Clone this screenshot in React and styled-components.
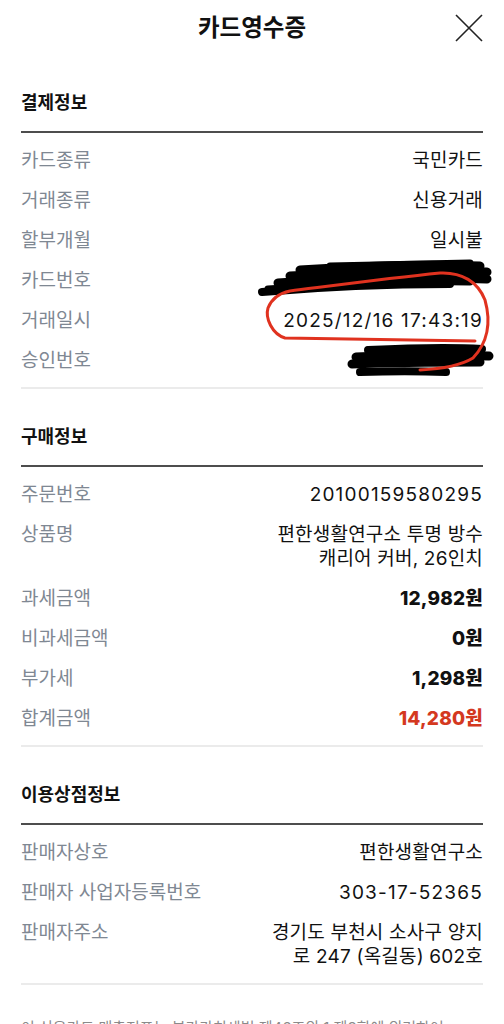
import React from 'react';
import styled, { createGlobalStyle } from 'styled-components';

const GlobalStyle = createGlobalStyle`
  html, body { margin: 0; padding: 0; background: #fff; }
  body {
    font-family: Inter, "Noto Sans CJK KR", sans-serif;
    -webkit-font-smoothing: antialiased;
    color: #111;
  }
  * { box-sizing: border-box; }
`;

const Page = styled.div`
  position: relative;
  width: 504px;
  height: 1024px;
  overflow: hidden;
  background: #fff;
`;

const Header = styled.header`
  height: 55px;
  display: grid;
  grid-template-columns: 1fr auto 1fr;
  align-items: center;
  padding: 0 21px;
`;

const Title = styled.h1`
  grid-column: 2;
  margin: 0;
  font-size: 23.5px;
  line-height: 28px;
  font-weight: 700;
  color: #111;
`;

const CloseButton = styled.button`
  grid-column: 3;
  justify-self: end;
  width: 30px;
  height: 30px;
  margin-right: -1px;
  padding: 0;
  border: 0;
  background: none;
  display: flex;
  align-items: center;
  justify-content: center;
`;

const Section = styled.section`
  padding: 0 21px;
`;

const SectionTitle = styled.h2`
  margin: 36px 0 0;
  font-size: 18px;
  line-height: 24px;
  font-weight: 700;
  color: #111;
`;

const Rule = styled.div`
  height: 2px;
  background: ${(p) => (p.$strong ? '#4d4d4d' : '#ebebeb')};
  margin-top: ${(p) => (p.$strong ? '16px' : '0')};
`;

const List = styled.dl`
  margin: 0;
  padding: 16px 0 14px;
  display: flex;
  flex-direction: column;
  gap: 16px;
`;

const Row = styled.div`
  display: flex;
  justify-content: space-between;
  align-items: flex-start;
  gap: 16px;
  min-height: 24px;
`;

const Label = styled.dt`
  flex-shrink: 0;
  font-size: 19px;
  line-height: 24px;
  color: #7f8893;
  font-weight: 400;
`;

const Value = styled.dd`
  margin: 0;
  max-width: 222px;
  text-align: right;
  font-size: 19px;
  line-height: 24px;
  letter-spacing: ${(p) => (p.$numeric ? '1.2px' : '0.2px')};
  font-weight: ${(p) => (p.$amount ? 800 : 400)};
  color: ${(p) => (p.$total ? '#d4391f' : '#111')};
`;

const Note = styled.p`
  margin: 32px 0 0;
  padding: 0 21px;
  font-size: 15px;
  line-height: 22px;
  color: #8a8a8a;
  white-space: nowrap;
`;

const Annotation = styled.svg`
  position: absolute;
  left: 0;
  top: 0;
  pointer-events: none;
`;

const payment = [
  ['카드종류', '국민카드'],
  ['거래종류', '신용거래'],
  ['할부개월', '일시불'],
  ['카드번호', ''],
  ['거래일시', '2025/12/16 17:43:19', 'number'],
  ['승인번호', ''],
];

const purchase = [
  ['주문번호', '20100159580295', 'number'],
  ['상품명', '편한생활연구소 투명 방수 캐리어 커버, 26인치'],
  ['과세금액', '12,982원', 'amount'],
  ['비과세금액', '0원', 'amount'],
  ['부가세', '1,298원', 'amount'],
  ['합계금액', '14,280원', 'total'],
];

const store = [
  ['판매자상호', '편한생활연구소'],
  ['판매자 사업자등록번호', '303-17-52365', 'number'],
  ['판매자주소', '경기도 부천시 소사구 양지로 247 (옥길동) 602호'],
];

function InfoSection({ title, rows }) {
  return (
    <Section>
      <SectionTitle>{title}</SectionTitle>
      <Rule $strong />
      <List>
        {rows.map(([label, value, kind]) => (
          <Row key={label}>
            <Label>{label}</Label>
            <Value
              $numeric={kind === 'number'}
              $amount={kind === 'amount' || kind === 'total'}
              $total={kind === 'total'}
            >
              {value}
            </Value>
          </Row>
        ))}
      </List>
      <Rule />
    </Section>
  );
}

function Marks() {
  return (
    <Annotation width="504" height="1024" viewBox="0 0 504 1024">
      <g fill="none" stroke="#000" strokeLinecap="round" strokeLinejoin="round">
        <path strokeWidth="9" d="M300 270 C 360 266, 420 264, 480 266" />
        <path strokeWidth="9" d="M290 276 C 360 272, 430 270, 487 272" />
        <path strokeWidth="9" d="M278 283 C 340 278, 420 276, 487 279" />
        <path strokeWidth="8" d="M262 292 C 320 287, 380 284, 450 284" />
        <path strokeWidth="7" d="M268 289 L 330 285 M 330 266 L 470 263 M 290 280 L 470 282" />
        <path strokeWidth="8" d="M368 350 C 410 348, 450 347, 482 349" />
        <path strokeWidth="9" d="M356 357 C 400 355, 450 355, 489 356" />
        <path strokeWidth="9" d="M352 364 C 400 362, 440 362, 480 362" />
        <path strokeWidth="8" d="M360 372 C 390 371, 420 371, 446 372" />
      </g>
      <path
        fill="none"
        stroke="#e0321f"
        strokeWidth="3"
        strokeLinecap="round"
        d="M475 341 C 420 340, 340 339, 285 338 C 272 334, 265 318, 268 308 C 272 298, 280 293, 290 291 C 330 286, 390 278, 440 273 C 462 272, 478 282, 485 300 C 490 318, 490 340, 473 358 C 460 366, 440 369, 420 370"
      />
    </Annotation>
  );
}

export default function App() {
  return (
    <Page>
      <GlobalStyle />
      <Header>
        <Title>카드영수증</Title>
        <CloseButton aria-label="닫기">
          <svg width="28" height="28" viewBox="0 0 28 28">
            <path d="M1 1 L27 27 M27 1 L1 27" stroke="#222" strokeWidth="1.6" fill="none" />
          </svg>
        </CloseButton>
      </Header>
      <InfoSection title="결제정보" rows={payment} />
      <InfoSection title="구매정보" rows={purchase} />
      <InfoSection title="이용상점정보" rows={store} />
      <Note>이 신용카드 매출전표는 부가가치세법 제46조의 1 제3항에 의거하여</Note>
      <Marks />
    </Page>
  );
}
